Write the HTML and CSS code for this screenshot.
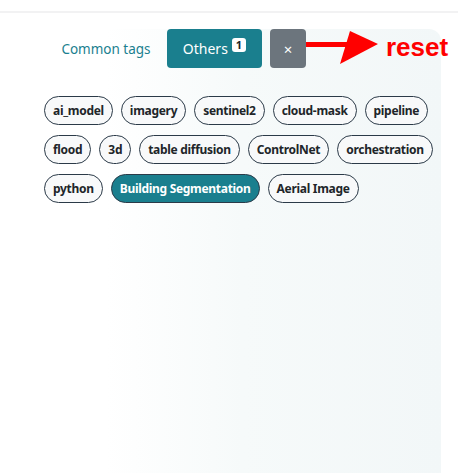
FILE: index.html
```html
<!DOCTYPE html>
<html>
<head>
<meta charset="utf-8">
<link rel="stylesheet" href="styles.css">
</head>
<body>
<div class="topbar"></div>
<div class="panel">
  <div class="toolbar">
    <button class="btn-link">Common tags</button>
    <button class="btn-primary">Others <span class="badge">1</span></button>
    <button class="btn-reset">×</button>
  </div>
  <div class="tags">
    <span class="tag">ai_model</span>
    <span class="tag">imagery</span>
    <span class="tag">sentinel2</span>
    <span class="tag">cloud-mask</span>
    <span class="tag">pipeline</span>
    <span class="tag">flood</span>
    <span class="tag">3d</span>
    <span class="tag">table diffusion</span>
    <span class="tag">ControlNet</span>
    <span class="tag">orchestration</span>
    <span class="tag">python</span>
    <span class="tag tag-active">Building Segmentation</span>
    <span class="tag">Aerial Image</span>
  </div>
  <div class="annotation">
    <svg class="arrow" width="74" height="36" viewBox="0 0 74 36">
      <rect x="0" y="11" width="46" height="5" fill="#ff0000"/>
      <polygon points="44,0 72,13 34,33" fill="#ff0000"/>
    </svg>
    <span class="reset-label">reset</span>
  </div>
</div>
</body>
</html>
```
FILE: styles.css
```css
html, body {
  margin: 0;
  padding: 0;
  background: #ffffff;
  font-family: "Noto Sans", "Open Sans", sans-serif;
}

.topbar {
  height: 11px;
  border-bottom: 2px solid #f2f2f3;
  margin-bottom: 16px;
}

.panel {
  position: relative;
  width: 441px;
  min-height: 444px;
  box-sizing: border-box;
  padding: 0 0 0 44px;
  border-top-right-radius: 12px;
  background: linear-gradient(to right, #ffffff 0%, #ffffff 24%, #f6fafa 55%, #f2f7f8 100%);
}

.toolbar {
  display: flex;
  align-items: stretch;
  gap: 8px;
  height: 39px;
  margin-left: 9px;
}

.toolbar button {
  border: none;
  border-radius: 4px;
  font-family: inherit;
  font-size: 14px;
  cursor: pointer;
  display: flex;
  align-items: center;
  justify-content: center;
}

.btn-link {
  background: transparent;
  color: #1b7f8f;
  width: 106px;
  padding: 0;
  font-size: 13.5px !important;
}

.btn-primary {
  background: #1a7f8e;
  color: #ffffff;
  width: 95px;
  padding: 0;
  gap: 4px;
}

.badge {
  background: #ffffff;
  color: #212529;
  font-size: 11px;
  font-weight: 700;
  line-height: 14px;
  padding: 0 4px;
  border-radius: 3px;
  align-self: flex-start;
  margin-top: 9px;
}

.btn-reset {
  background: #6c757d;
  color: #ffffff;
  width: 36px;
  padding: 0;
  font-size: 15px !important;
}

.tags {
  display: flex;
  flex-wrap: wrap;
  gap: 10px 8px;
  margin-top: 28px;
}

.tag {
  box-sizing: border-box;
  height: 29px;
  display: inline-flex;
  align-items: center;
  padding: 0 8px;
  border: 1px solid #2b3a48;
  border-radius: 15px;
  background: #f8f9fa;
  color: #212529;
  font-size: 12px;
  font-weight: 700;
  letter-spacing: -0.3px;
}

.tag-active {
  background: #1a7f8e;
  color: #ffffff;
  border-color: #2b3a48;
}

.annotation {
  position: absolute;
  left: 306px;
  top: 2px;
  display: flex;
  align-items: flex-start;
}

.arrow {
  display: block;
}

.reset-label {
  font-family: "Liberation Sans", Arial, sans-serif;
  font-weight: 700;
  font-size: 26px;
  color: #ff0000;
  margin-left: 6px;
  line-height: 30px;
  margin-top: 1px;
}
```
